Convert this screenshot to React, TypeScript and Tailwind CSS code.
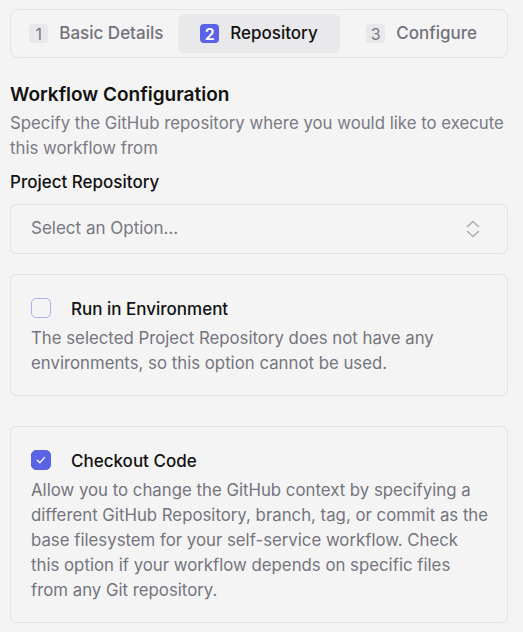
import { useState } from "react";

const font = { fontFamily: "Inter, 'Noto Sans', sans-serif" };

const steps = [
  { n: 1, label: "Basic Details" },
  { n: 2, label: "Repository" },
  { n: 3, label: "Configure" },
];

function Stepper({ active }: { active: number }) {
  return (
    <div className="grid grid-cols-3 p-1 rounded-lg border border-[#e3e3e3]">
      {steps.map((s) => {
        const on = s.n === active;
        return (
          <div
            key={s.n}
            className={`flex items-center justify-center gap-[11px] h-[39px] rounded-md ${on ? "bg-[#e9e9ec]" : ""}`}
          >
            <span
              className={`flex items-center justify-center w-[19px] h-[19px] rounded-[4px] text-[16px] ${
                on ? "bg-[#5a62e5] text-white font-semibold" : "bg-[#e8e8ea] text-[#77777f]"
              }`}
            >
              {s.n}
            </span>
            <span className={`text-[17px] font-medium ${on ? "text-[#111]" : "text-[#72727c]"}`}>{s.label}</span>
          </div>
        );
      })}
    </div>
  );
}

function Check({ checked, onToggle }: { checked: boolean; onToggle: () => void }) {
  return (
    <button
      onClick={onToggle}
      className={`flex items-center justify-center w-[20px] h-[20px] rounded-[5px] border ${
        checked ? "bg-[#5a62e5] border-[#5a62e5]" : "bg-transparent border-[#a9adf2]"
      }`}
    >
      {checked && (
        <svg width="12" height="12" viewBox="0 0 12 12" fill="none">
          <path d="M2.3 6.3 4.8 8.7 9.7 3.4" stroke="white" strokeWidth="1.3" strokeLinecap="round" strokeLinejoin="round" />
        </svg>
      )}
    </button>
  );
}

function OptionCard({
  title,
  desc,
  checked,
  onToggle,
}: {
  title: string;
  desc: string;
  checked: boolean;
  onToggle: () => void;
}) {
  return (
    <div className="rounded-md border border-[#e3e3e3] pl-5 pr-[18px] pt-[23px] pb-[19px]">
      <div className="flex items-center gap-[20px] h-[20px]">
        <Check checked={checked} onToggle={onToggle} />
        <span className="mt-[2px] text-[17px] font-medium leading-[24px] text-[#111]">{title}</span>
      </div>
      <p className="mt-[8px] text-[16.8px] leading-[25px] text-[#74747e]">{desc}</p>
    </div>
  );
}

export default function App() {
  const [runEnv, setRunEnv] = useState(false);
  const [checkout, setCheckout] = useState(true);

  return (
    <div className="min-h-screen bg-[#f4f4f4] pl-[10px] pr-[15px] pt-[9px] pb-[10px]" style={font}>
      <Stepper active={2} />

      <h2 className="mt-[25px] text-[19px] font-semibold leading-[24px] text-[#111]">Workflow Configuration</h2>
      <p className="mt-[4px] text-[16.8px] leading-[25px] text-[#7a7a84]">
        Specify the GitHub repository where you would like to execute this workflow from
      </p>

      <label className="block mt-[9px] text-[17px] font-medium leading-[24px] text-[#111]">Project Repository</label>
      <button className="mt-[10px] w-full h-[50px] flex items-center justify-between rounded-md border border-[#e3e3e3] pl-5 pr-[27px] text-left">
        <span className="text-[17px] text-[#777780]">Select an Option…</span>
        <svg width="14" height="20" viewBox="0 0 14 20" fill="none">
          <path d="M1.5 7.5 7 2.5l5.5 5M1.5 12.5 7 17.5l5.5-5" stroke="#acacb2" strokeWidth="1.5" strokeLinecap="round" strokeLinejoin="round" />
        </svg>
      </button>

      <div className="mt-[20px]">
        <OptionCard
          title="Run in Environment"
          desc="The selected Project Repository does not have any environments, so this option cannot be used."
          checked={runEnv}
          onToggle={() => setRunEnv(!runEnv)}
        />
      </div>

      <div className="mt-[30px]">
        <OptionCard
          title="Checkout Code"
          desc="Allow you to change the GitHub context by specifying a different GitHub Repository, branch, tag, or commit as the base filesystem for your self-service workflow. Check this option if your workflow depends on specific files from any Git repository."
          checked={checkout}
          onToggle={() => setCheckout(!checkout)}
        />
      </div>
    </div>
  );
}
